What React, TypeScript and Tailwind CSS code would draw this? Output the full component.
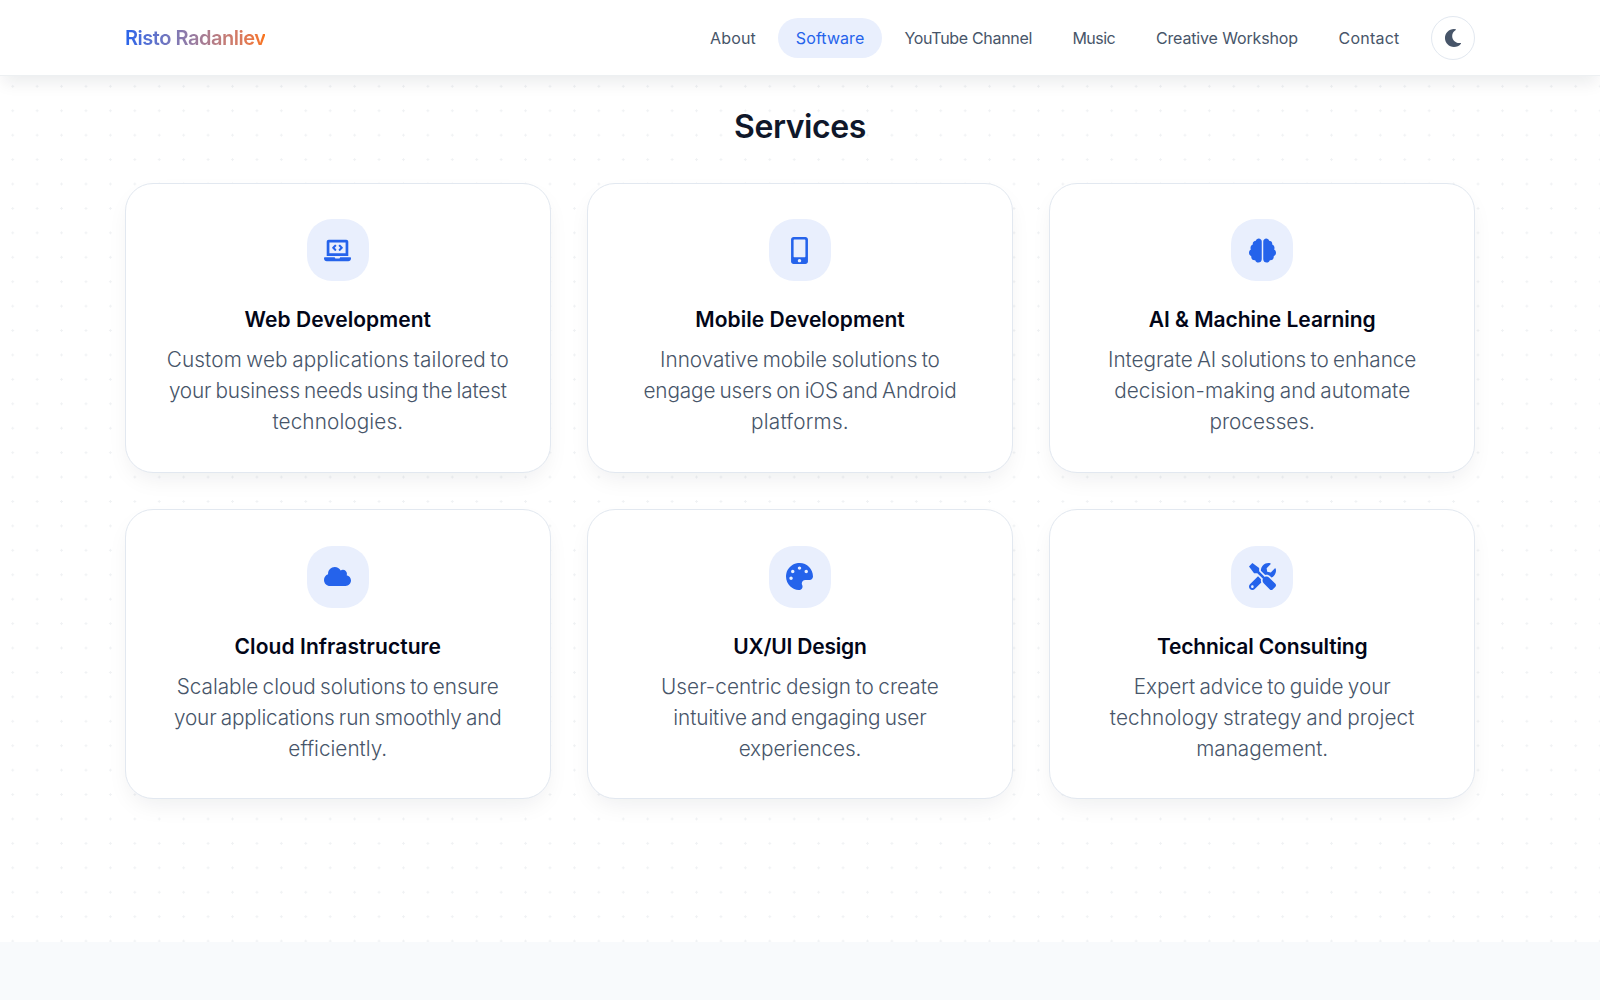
import {
  FaBrain,
  FaCloud,
  FaLaptopCode,
  FaMobileAlt,
  FaMoon,
  FaPalette,
  FaTools,
} from "react-icons/fa";
import type { IconType } from "react-icons";
import clsx from "clsx";

type Line = { text: string; tracking: string };

type Service = {
  icon: IconType;
  title: string;
  tracking: string;
  lines: Line[];
};

const navItems = [
  { label: "About", className: "w-[81px] tracking-[0.17px]" },
  { label: "Software", className: "w-[104px] tracking-[0.08px]", active: true },
  { label: "YouTube Channel", className: "w-[163px] tracking-[-0.32px]" },
  { label: "Music", className: "w-[79px] tracking-[-0.5px]" },
  { label: "Creative Workshop", className: "w-[178px] tracking-[-0.14px]" },
  { label: "Contact", className: "w-[97px] tracking-[0.23px]" },
];

const services: Service[] = [
  {
    icon: FaLaptopCode,
    title: "Web Development",
    tracking: "tracking-[0.05px]",
    lines: [
      { text: "Custom web applications tailored to", tracking: "tracking-[0.12px]" },
      { text: "your business needs using the latest", tracking: "tracking-[-0.18px]" },
      { text: "technologies.", tracking: "tracking-[0.1px]" },
    ],
  },
  {
    icon: FaMobileAlt,
    title: "Mobile Development",
    tracking: "tracking-[0.06px]",
    lines: [
      { text: "Innovative mobile solutions to", tracking: "tracking-[-0.04px]" },
      { text: "engage users on iOS and Android", tracking: "tracking-[-0.13px]" },
      { text: "platforms.", tracking: "tracking-[0.2px]" },
    ],
  },
  {
    icon: FaBrain,
    title: "AI & Machine Learning",
    tracking: "tracking-[-0.03px]",
    lines: [
      { text: "Integrate AI solutions to enhance", tracking: "tracking-[-0.06px]" },
      { text: "decision-making and automate", tracking: "tracking-[0.05px]" },
      { text: "processes.", tracking: "tracking-normal" },
    ],
  },
  {
    icon: FaCloud,
    title: "Cloud Infrastructure",
    tracking: "tracking-[0.08px]",
    lines: [
      { text: "Scalable cloud solutions to ensure", tracking: "tracking-[-0.05px]" },
      { text: "your applications run smoothly and", tracking: "tracking-[-0.13px]" },
      { text: "efficiently.", tracking: "tracking-normal" },
    ],
  },
  {
    icon: FaPalette,
    title: "UX/UI Design",
    tracking: "tracking-[-0.2px]",
    lines: [
      { text: "User-centric design to create", tracking: "tracking-[0.04px]" },
      { text: "intuitive and engaging user", tracking: "tracking-[-0.11px]" },
      { text: "experiences.", tracking: "tracking-[-0.12px]" },
    ],
  },
  {
    icon: FaTools,
    title: "Technical Consulting",
    tracking: "tracking-[-0.15px]",
    lines: [
      { text: "Expert advice to guide your", tracking: "tracking-[-0.06px]" },
      { text: "technology strategy and project", tracking: "tracking-[0.12px]" },
      { text: "management.", tracking: "tracking-normal" },
    ],
  },
];

function Header() {
  return (
    <header className="relative z-10 h-[76px] border-b border-[#edf0f2] bg-white shadow-[0_10px_15px_-3px_rgba(15,23,42,0.08)]">
      <div className="mx-auto flex h-[75px] w-[1350px] items-center justify-between">
        <a
          href="#"
          className="bg-linear-to-r from-[#2563eb] to-[#f97316] bg-clip-text text-xl font-semibold tracking-[-0.48px] text-transparent"
        >
          Risto Radanliev
        </a>
        <div className="flex items-center gap-[13.5px]">
          <nav className="flex gap-[4.6px]">
            {navItems.map((item) => (
              <a
                key={item.label}
                href="#"
                className={clsx(
                  "flex h-10 items-center justify-center rounded-full pt-px whitespace-nowrap",
                  item.active ? "bg-[#e9effd] text-[#2563eb]" : "text-[#475569]",
                  item.className
                )}
              >
                {item.label}
              </a>
            ))}
          </nav>
          <button
            aria-label="Toggle theme"
            className="mt-px flex size-11 items-center justify-center rounded-full border border-slate-200 bg-white text-[#475569]"
          >
            <FaMoon size={18} />
          </button>
        </div>
      </div>
    </header>
  );
}

function ServiceCard({ icon: Icon, title, tracking, lines }: Service) {
  return (
    <div className="flex h-[290px] flex-col items-center rounded-[28px] border border-slate-200 bg-white pt-[35.6px] text-center shadow-[0_10px_24px_-6px_rgba(15,23,42,0.08)]">
      <div className="flex size-[62px] items-center justify-center rounded-[25px] bg-[#e9effd] text-[#2563eb]">
        <Icon size={27} />
      </div>
      <h3
        className={clsx(
          "mt-[23px] mb-2 text-[21px] leading-8 font-semibold text-slate-950",
          tracking
        )}
      >
        {title}
      </h3>
      <p className="text-[20.75px] leading-[31.1px] font-light text-[#475569] [word-spacing:-1.5px]">
        {lines.map((line) => (
          <span key={line.text} className={clsx("block whitespace-nowrap", line.tracking)}>
            {line.text}
          </span>
        ))}
      </p>
    </div>
  );
}

function ServicesSection() {
  return (
    <section className="h-[866px] bg-white bg-[radial-gradient(circle,#f0f2f4_1px,transparent_1px)] bg-size-[24.43px_24.43px] bg-position-[0.5px_-1.9px]">
      <div className="mx-auto w-[1350px] pt-[31px]">
        <h2 className="text-center text-[32px] leading-10 font-semibold tracking-[-0.4px] text-[#0f172a]">
          Services
        </h2>
        <div className="mt-[35.5px] grid grid-cols-3 gap-[36.6px]">
          {services.map((service) => (
            <ServiceCard key={service.title} {...service} />
          ))}
        </div>
      </div>
    </section>
  );
}

export default function App() {
  return (
    <div className="h-screen overflow-hidden bg-[#f8fafc] font-['Inter',sans-serif]">
      <Header />
      <ServicesSection />
    </div>
  );
}
